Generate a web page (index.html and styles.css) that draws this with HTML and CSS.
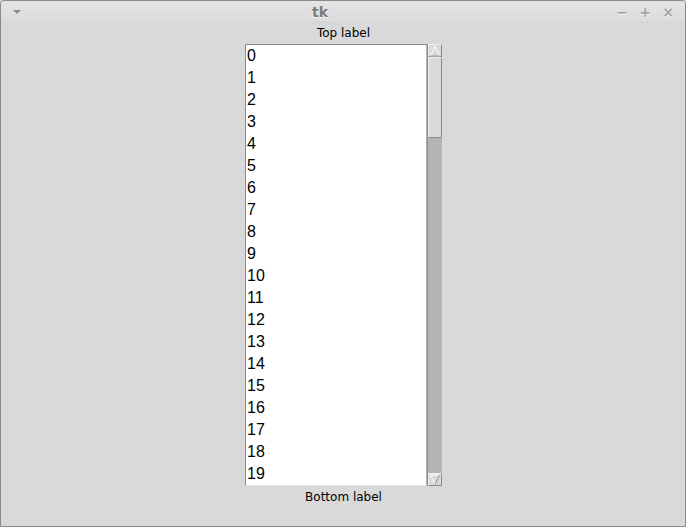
FILE: index.html
```html
<!DOCTYPE html>
<html lang="en">
<head>
    <meta charset="UTF-8">
    <title>tk</title>
    <link rel="stylesheet" href="styles.css">
</head>
<body>
    <div class="window">
        <div class="titlebar">
            <span class="menu-arrow"></span>
            <span class="title">tk</span>
            <div class="controls">
                <span class="ctl">&minus;</span>
                <span class="ctl">+</span>
                <span class="ctl">&times;</span>
            </div>
        </div>

        <div class="content">
            <div class="label">Top label</div>
            <div class="list-wrap">
                <ul class="listbox" id="listbox"></ul>
                <div class="scrollbar">
                    <div class="arrow up"><svg width="12" height="12" viewBox="0 0 12 12"><path d="M6 1.5 L10.5 11 L1.5 11 Z" fill="#d9d9d9" stroke="#ffffff" stroke-width="1"/><path d="M10.5 11 L1.5 11" stroke="#8a8a8a"/></svg></div>
                    <div class="trough">
                        <div class="slider"></div>
                    </div>
                    <div class="arrow down"><svg width="12" height="12" viewBox="0 0 12 12"><path d="M1.5 1 L10.5 1 L6 10.5 Z" fill="#d9d9d9" stroke="#ffffff" stroke-width="1"/><path d="M10.5 1 L6 10.5" stroke="#8a8a8a"/></svg></div>
                </div>
            </div>
            <div class="label bottom">Bottom label</div>
        </div>
    </div>

    <script>
        // fill the listbox with 0..19
        var list = document.getElementById('listbox');
        for (var i = 0; i < 20; i++) {
            var li = document.createElement('li');
            li.textContent = i;
            list.appendChild(li);
        }
    </script>
</body>
</html>
```

FILE: styles.css
```css
html, body {
    margin: 0;
    padding: 0;
    background: #d9d9d9;
}

.window {
    width: 686px;
    height: 527px;
    box-sizing: border-box;
    border: 1px solid #8a8a8a;
    border-radius: 4px 4px 0 0;
    background: #d9d9d9;
    font-family: "DejaVu Sans", sans-serif;
    overflow: hidden;
}

.titlebar {
    height: 21px;
    position: relative;
    display: flex;
    align-items: center;
    background: linear-gradient(#e4e4e4, #dcdcdc);
    border-bottom: 1px solid #d3d3d3;
}

.menu-arrow {
    margin-left: 12px;
    width: 0;
    height: 0;
    border-left: 4px solid transparent;
    border-right: 4px solid transparent;
    border-top: 4px solid #8c8c8c;
}

.title {
    position: absolute;
    left: 0;
    right: 46px;
    text-align: center;
    font-size: 14px;
    font-weight: bold;
    color: #7a7a7a;
    text-shadow: 0 1px 0 #f4f4f4;
}

.controls {
    margin-left: auto;
    margin-right: 10px;
    display: flex;
    gap: 9px;
}

.ctl {
    width: 14px;
    text-align: center;
    font-size: 14px;
    font-weight: bold;
    color: #a4a4a4;
    text-shadow: 0 1px 0 #f4f4f4;
}

.content {
    display: flex;
    flex-direction: column;
    align-items: center;
}

.label {
    height: 21px;
    line-height: 21px;
    font-size: 12px;
    color: #000;
    padding-left: 1px;
}

.label.bottom {
    padding-top: 1px;
}

.list-wrap {
    display: flex;
    margin-left: 2px;
}

.listbox {
    list-style: none;
    margin: 0;
    padding: 0;
    width: 180px;
    background: #fff;
    border: 1px solid #8a8a8a;
    border-right-color: #b4b4b4;
    border-bottom-color: #e6e6e6;
    font-family: "Liberation Sans", Arial, sans-serif;
    font-size: 16px;
}

.listbox li {
    height: 22px;
    line-height: 22px;
    padding-left: 1px;
    color: #000;
}

.scrollbar {
    width: 14px;
    display: flex;
    flex-direction: column;
    background: #b4b4b4;
    border-left: 1px solid #8a8a8a;
    border-right: 1px solid #d9d9d9;
}

.arrow {
    height: 13px;
    display: flex;
    align-items: center;
    justify-content: center;
    background: #d9d9d9;
    box-sizing: border-box;
    border: 1px solid;
    border-color: #f0f0f0 #8a8a8a #8a8a8a #f0f0f0;
}

.trough {
    flex: 1;
    background: #b4b4b4;
}

.slider {
    height: 81px;
    box-sizing: border-box;
    background: #d9d9d9;
    border: 1px solid;
    border-color: #f0f0f0 #8a8a8a #8a8a8a #f0f0f0;
}
```
